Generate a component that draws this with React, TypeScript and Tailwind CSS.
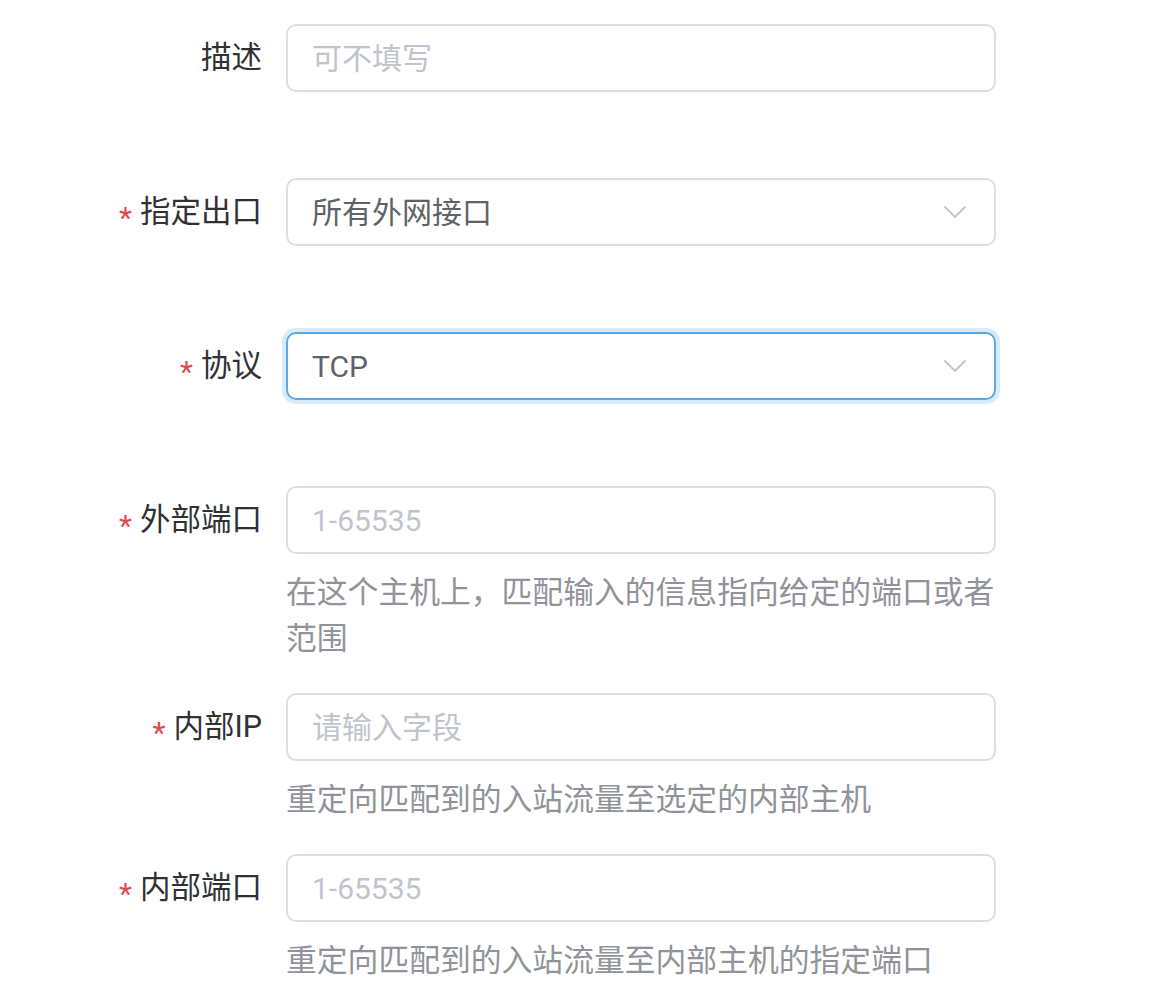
import React from "react";

const font = {
  fontFamily: 'Roboto, "Noto Sans CJK SC", sans-serif',
};

const Chevron = () => (
  <svg width="24" height="14" viewBox="0 0 24 14" className="shrink-0">
    <polyline
      points="1.5,1.5 12,12 22.5,1.5"
      fill="none"
      stroke="#c0c4cc"
      strokeWidth="1.8"
    />
  </svg>
);

type RowProps = {
  label: string;
  required?: boolean;
  help?: string;
  children: React.ReactNode;
};

const Row = ({ label, required, help, children }: RowProps) => {
  return (
    <div className={`flex items-start ${help ? "mb-[31px]" : "mb-[86px]"}`}>
      <div className="w-[286px] h-[68px] pr-6 flex items-center justify-end text-[30.5px] text-[#303133]">
        {required && (
          <span className="text-[#e0474f] text-[30px] mr-[8px] relative top-[5px]">*</span>
        )}
        <span>{label}</span>
      </div>
      <div className="w-[710px]">
        {children}
        {help && (
          <p className="mt-4 text-[30.8px] leading-[46px] text-[#909399]">{help}</p>
        )}
      </div>
    </div>
  );
};

const Input = ({ placeholder }: { placeholder: string }) => (
  <div className="h-[68px] border-2 border-[#dcdfe6] rounded-[10px] flex items-center pl-[24px] text-[30px] text-[#c0c4cc]">
    {placeholder}
  </div>
);

const Select = ({ value, focused }: { value: string; focused?: boolean }) => (
  <div
    className={
      focused
        ? "h-[68px] border-2 border-[#5ea9e2] rounded-[10px] ring-4 ring-[#d8ebfb] flex items-center justify-between pl-6 pr-[27px] text-[30px] text-[#606266]"
        : "h-[68px] border-2 border-[#dcdfe6] rounded-[10px] flex items-center justify-between pl-6 pr-[27px] text-[30px] text-[#606266]"
    }
  >
    <span>{value}</span>
    <Chevron />
  </div>
);

export default function App() {
  return (
    <div className="bg-white w-[1158px] min-h-[1000px] pt-6" style={font}>
      <Row label="描述">
        <Input placeholder="可不填写" />
      </Row>
      <Row label="指定出口" required>
        <Select value="所有外网接口" />
      </Row>
      <Row label="协议" required>
        <Select value="TCP" focused />
      </Row>
      <Row
        label="外部端口"
        required
        help="在这个主机上，匹配输入的信息指向给定的端口或者范围"
      >
        <Input placeholder="1-65535" />
      </Row>
      <Row label="内部IP" required help="重定向匹配到的入站流量至选定的内部主机">
        <Input placeholder="请输入字段" />
      </Row>
      <Row label="内部端口" required help="重定向匹配到的入站流量至内部主机的指定端口">
        <Input placeholder="1-65535" />
      </Row>
    </div>
  );
}
